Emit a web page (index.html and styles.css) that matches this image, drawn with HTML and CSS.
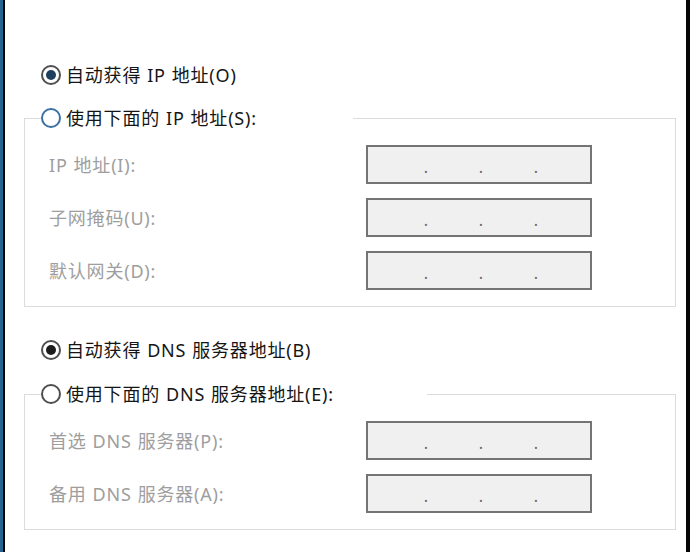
FILE: index.html
```html
<!DOCTYPE html>
<html lang="zh-CN">
<head>
<meta charset="utf-8">
<title>Internet 协议版本 4 (TCP/IPv4) 属性</title>
<link rel="stylesheet" href="styles.css">
</head>
<body>
<div class="window">
  <div class="frame">
    <div class="radio-row">
      <span class="radio checked"></span>
      <span class="text">自动获得 IP 地址(O)</span>
    </div>

    <fieldset class="group group-ip">
      <legend class="radio-row legend legend-ip">
        <span class="radio focus"></span>
        <span class="text">使用下面的 IP 地址(S):</span>
      </legend>
      <div class="fields">
        <span class="label">IP 地址(I):</span>
        <div class="ipbox"><span>.</span><span>.</span><span>.</span></div>
        <span class="label">子网掩码(U):</span>
        <div class="ipbox"><span>.</span><span>.</span><span>.</span></div>
        <span class="label">默认网关(D):</span>
        <div class="ipbox"><span>.</span><span>.</span><span>.</span></div>
      </div>
    </fieldset>

    <div class="radio-row row-dns">
      <span class="radio checked dark"></span>
      <span class="text">自动获得 DNS 服务器地址(B)</span>
    </div>

    <fieldset class="group group-dns">
      <legend class="radio-row legend legend-dns">
        <span class="radio"></span>
        <span class="text">使用下面的 DNS 服务器地址(E):</span>
      </legend>
      <div class="fields">
        <span class="label">首选 DNS 服务器(P):</span>
        <div class="ipbox"><span>.</span><span>.</span><span>.</span></div>
        <span class="label">备用 DNS 服务器(A):</span>
        <div class="ipbox"><span>.</span><span>.</span><span>.</span></div>
      </div>
    </fieldset>
  </div>
</div>
</body>
</html>
```

FILE: styles.css
```css
html, body {
  margin: 0;
  padding: 0;
  background: #ffffff;
}

body {
  font-family: "Noto Sans", "Noto Sans CJK SC", sans-serif;
  font-size: 18px;
  color: #151515;
}

.window {
  width: 690px;
  height: 552px;
  box-sizing: border-box;
  border-left: 3px solid #276390;
  overflow: hidden;
}

.frame {
  height: 100%;
  box-sizing: border-box;
  border-left: 2px solid #050505;
  border-right: 4px solid #050505;
  background: #ffffff;
  padding-top: 62px;
}

.radio-row {
  display: flex;
  align-items: center;
  gap: 5px;
  height: 26px;
  padding-left: 36px;
  line-height: 26px;
  white-space: nowrap;
}

.text,
.label {
  letter-spacing: 0.8px;
  word-spacing: 0.5px;
}

.row-dns {
  margin-top: 30px;
}

.radio {
  flex: none;
  width: 20px;
  height: 20px;
  box-sizing: border-box;
  border: 2px solid #4f4f4f;
  border-radius: 50%;
  background: #ffffff;
  display: flex;
  align-items: center;
  justify-content: center;
}

.radio.focus {
  border-color: #3a70a3;
}

.radio.checked::after {
  content: "";
  width: 10px;
  height: 10px;
  border-radius: 50%;
  background: #1e3e60;
}

.radio.dark::after {
  background: #1c1c1c;
}

.group {
  margin: 17px 10px 0 19px;
  padding: 14px 0 16px 24px;
  border: 1px solid #dcdcdc;
  min-width: 0;
}

.group-dns {
  margin-top: 18px;
}

.legend {
  padding: 0;
  margin-left: -8px;
  box-sizing: border-box;
}

.legend-ip {
  width: 312px;
}

.legend-dns {
  width: 386px;
}

.fields {
  display: grid;
  grid-template-columns: 317px 226px;
  row-gap: 14px;
  align-items: center;
}

.label {
  color: #9e9e9e;
  white-space: nowrap;
  line-height: 24px;
}

.ipbox {
  height: 39px;
  box-sizing: border-box;
  border: 2px solid #747474;
  background: #f0f0f0;
  display: flex;
  align-items: center;
  gap: 45px;
  padding-left: 53px;
  color: #6a6a6a;
  font-size: 16px;
  line-height: 16px;
}

.ipbox span {
  width: 10px;
  text-align: center;
  padding-top: 4px;
}
```
